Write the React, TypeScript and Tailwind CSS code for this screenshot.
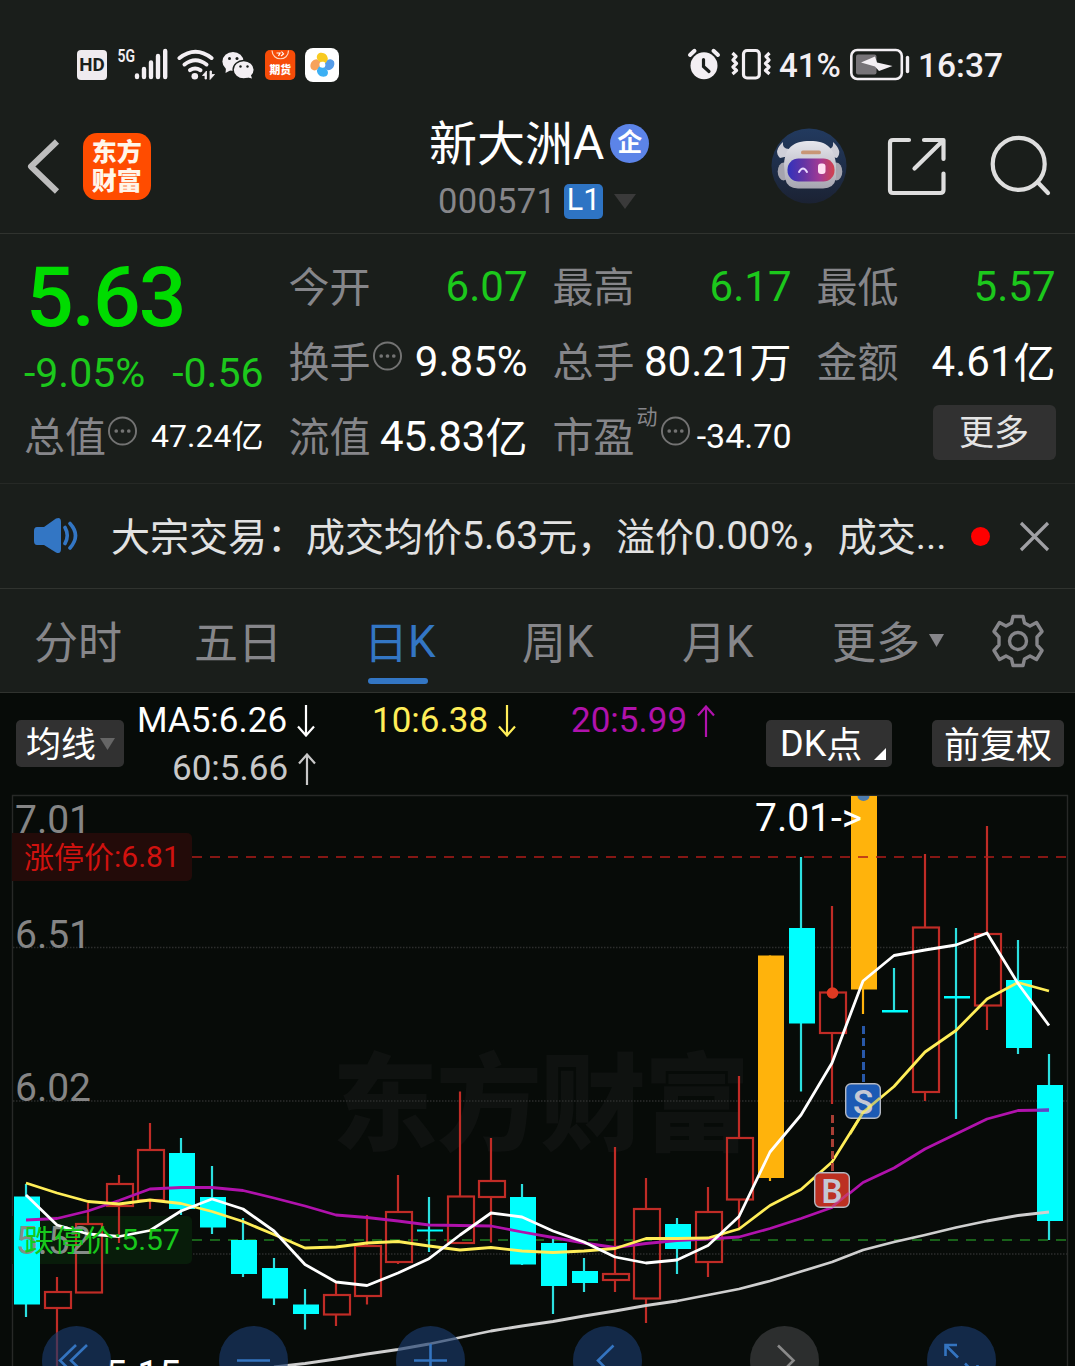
import React from "react";

const FONT = "font-[Roboto,'Noto_Sans_CJK_SC',sans-serif]";

type Kind = "down" | "up" | "mark";
type Candle = { k: Kind; t: number; b: number; h: number; l: number };
const c = (k: Kind, t: number, b: number, h: number, l: number): Candle => ({ k, t, b, h, l });

const candles: Candle[] = [
  c("down", 1196.5, 1304.5, 1184, 1317),
  c("up", 1292, 1308, 1277, 1380),
  c("up", 1224, 1292.5, 1203, 1292),
  c("up", 1184, 1206, 1175, 1243),
  c("up", 1150, 1200, 1123, 1209),
  c("down", 1153, 1209, 1138, 1215),
  c("down", 1197, 1227.5, 1166, 1234),
  c("down", 1240, 1274, 1218, 1277),
  c("down", 1268, 1298.5, 1258, 1305),
  c("down", 1304.5, 1314, 1289, 1329.5),
  c("up", 1295, 1314.5, 1282, 1326),
  c("up", 1246, 1296, 1215, 1304.5),
  c("up", 1212, 1262, 1175, 1264),
  c("down", 1229.5, 1231.5, 1197, 1252),
  c("up", 1196.5, 1243, 1091.5, 1243),
  c("up", 1181, 1197, 1138, 1242.5),
  c("down", 1197, 1264.5, 1184, 1265),
  c("down", 1243, 1286, 1239, 1314),
  c("down", 1271, 1283, 1258, 1292),
  c("up", 1274, 1280, 1147, 1292),
  c("up", 1209, 1298.5, 1178, 1323),
  c("down", 1224, 1249, 1218, 1274),
  c("up", 1212, 1262, 1187, 1277),
  c("up", 1138, 1199.5, 1076, 1230),
  c("mark", 955.5, 1178, 955.5, 1181),
  c("down", 928, 1023.5, 857, 1091.5),
  c("up", 992.5, 1033, 906, 1104),
  c("mark", 796, 989.5, 796, 1014),
  c("down", 1010, 1012.5, 968, 1011),
  c("up", 927.5, 1092, 854, 1101),
  c("down", 996, 998.5, 928, 1119),
  c("up", 934, 1005.5, 826, 1030),
  c("down", 980, 1048, 940, 1054),
  c("down", 1085, 1221, 1054, 1240),
];

const ma5 = [1195, 1225, 1234, 1236.5, 1230.5, 1211, 1199, 1209, 1231, 1264.5, 1282, 1285.5, 1273, 1258.7, 1235, 1213, 1217, 1231, 1242, 1257, 1263, 1260, 1245.5, 1216.5, 1152, 1115, 1063, 981, 955.5, 950, 945, 933, 983.5, 1025.5];
const ma10 = [1183, 1193, 1201.5, 1204, 1200, 1203.5, 1211.5, 1221.5, 1234.5, 1248, 1247, 1243, 1241.5, 1246, 1250, 1247.5, 1251, 1252.5, 1251, 1248.5, 1238.5, 1238.5, 1238, 1229, 1205.5, 1189.5, 1162, 1112.5, 1086.5, 1052, 1030.5, 999, 982.5, 991];
const ma20 = [1220, 1218.5, 1211, 1200.5, 1189, 1187.5, 1187.5, 1190.5, 1198, 1206, 1215, 1217.5, 1221, 1225, 1225.5, 1226, 1232, 1237.5, 1243, 1247.5, 1243.5, 1240.5, 1239, 1237, 1228.5, 1218.5, 1207.5, 1182.5, 1168, 1149, 1134, 1119, 1110.5, 1110];
const ma60 = [1367, 1363.5, 1359, 1354, 1349.5, 1344, 1337.5, 1331, 1326, 1321.5, 1316, 1311, 1305.5, 1301, 1295, 1289, 1281, 1271.5, 1262, 1250, 1242, 1235, 1227.5, 1221, 1215.5, 1212];

const cx = (i: number) => 26 + i * 31;
const line = (v: number[], from = 0) => v.map((y, i) => `${cx(i + from)},${y}`).join(" ");

/* Lowers the Chinese runs slightly so they sit level with the Latin digits. */
function T({ s }: { s: string }) {
  return (
    <span>
      {s.split(/([\u3000-\uffef]+)/).filter(Boolean).map((part, i) =>
        /[\u3000-\uffef]/.test(part) ? <span key={i} className="align-[-0.045em] leading-none">{part}</span> : part,
      )}
    </span>
  );
}

function CandleShape({ d, x }: { d: Candle; x: number }) {
  if (d.k === "up") {
    return (
      <g stroke="#c02c26" strokeWidth={2.2} fill="none">
        <path d={`M${x} ${d.h}V${d.t}M${x} ${d.b}V${Math.max(d.b, d.l)}`} />
        <rect x={x - 12} y={d.t} width={26} height={d.b - d.t} />
      </g>
    );
  }
  const color = d.k === "down" ? "#00ffff" : "#ffb30c";
  return (
    <g>
      <path d={`M${x} ${d.h}V${d.l}`} stroke={d.k === "down" ? "#2ce0e0" : color} strokeWidth={2.2} />
      <rect x={x - 12} y={d.t} width={26} height={d.b - d.t} fill={color} />
    </g>
  );
}

function Marker({ x, y, letter, fill }: { x: number; y: number; letter: string; fill: string }) {
  return (
    <g>
      <rect x={x - 17.3} y={y - 17.3} width={34.6} height={34.6} rx={5.5} fill={fill} stroke="#b4b8c2" strokeWidth={1.4} />
      <text x={x} y={y + 12.7} fontSize={33} fontWeight={600} textAnchor="middle" fill="#c4c8d4" fontFamily="Roboto, sans-serif">{letter}</text>
    </g>
  );
}

function Chart() {
  return (
    <svg className="block" width="1075" height="572" viewBox="0 794 1075 572" fontFamily="Roboto, 'Noto Sans CJK SC', sans-serif">
      <text x="332" y="1142" fontSize="106" fontWeight="900" fill="#0f1210" fontFamily="'Noto Sans CJK SC', sans-serif" textLength="418">东方财富</text>
      <path d="M12.5 1366V795.5H1067.5V1366" fill="none" stroke="#272927" strokeWidth="1.4" />
      <path d="M13 947.5H1067M13 1101H1067M13 1254H1067" stroke="#2c2e2c" strokeWidth="1.5" strokeDasharray="1.5 1.5" />
      <path d="M12 833H187a5 5 0 0 1 5 5V876a5 5 0 0 1-5 5H12Z" fill="#230b09" />
      <path d="M12 1216H187a5 5 0 0 1 5 5V1259a5 5 0 0 1-5 5H12Z" fill="#081c0a" />
      <path d="M192 1240H1067" stroke="#208020" strokeWidth="1.6" strokeDasharray="10 8" />
      <g fontSize="39" fill="#858585">
        <text x="15" y="833">7.01</text>
        <text x="15" y="948">6.51</text>
        <text x="15" y="1101">6.02</text>
      </g>
      {candles.map((d, i) => <CandleShape key={i} d={d} x={cx(i)} />)}
      <path d="M192 857H1067" stroke="#b01c18" strokeWidth="1.6" strokeDasharray="10 8" />
      <text x="15.5" y="1253.5" fontSize="39" fill="#858d88">5.52</text>
      <g fill="none" strokeWidth="2.8" strokeLinejoin="round">
        <polyline points={line(ma60, 8)} stroke="#cfcfcf" />
        <polyline points={line(ma20)} stroke="#b012ac" />
        <polyline points={line(ma10)} stroke="#ffee58" />
        <polyline points={line(ma5)} stroke="#ffffff" />
      </g>
      <polyline points="1037,1110.3 1049,1110" stroke="#5a48c8" strokeWidth="2.8" />
      <text x="24" y="867" fontSize="30" fill="#d0120f"><tspan dy="1">涨停价</tspan><tspan dy="-1">:6.81</tspan></text>
      <text x="24" y="1250" fontSize="30" fill="#18c81c"><tspan dy="1">跌停价</tspan><tspan dy="-1">:5.57</tspan></text>
      <path d="M863.5 1026V1083" stroke="#2858a8" strokeWidth="3" strokeDasharray="8 4" />
      <path d="M832.5 1115V1172" stroke="#a83e34" strokeWidth="3" strokeDasharray="8 4" />
      <path d="M857.5 796a6 5 0 0 0 12 0Z" fill="#4d7cae" />
      <circle cx="832.5" cy="993" r="5.8" fill="#e03a22" />
      <Marker x={863} y={1101} letter="S" fill="#1c5ab4" />
      <Marker x={832} y={1190} letter="B" fill="#bc3022" />
      <polyline points="850,1134 863,1112.5 880,1098" fill="none" stroke="#ffee58" strokeWidth="2.8" opacity=".75" />
      <polyline points="832,1207 849,1193" fill="none" stroke="#c83ab0" strokeWidth="2.8" opacity=".6" />
      <text x="755" y="831" fontSize="39" fill="#fff">7.01-&gt;</text>
      <text x="105" y="1387.5" fontSize="39" fill="#fff">5.15</text>
    </svg>
  );
}

function RoundButton({ gray, children }: { gray?: boolean; children: React.ReactNode }) {
  return (
    <div className={`h-[69px] w-[69px] shrink-0 rounded-full ${gray ? "bg-[#3c3d3e]/70" : "bg-[#1a3a6c]/65"}`}>
      <svg width="69" height="69" viewBox="0 0 69 69" fill="none" stroke={gray ? "#8a8a8a" : "#3474c0"} strokeWidth="2.6">{children}</svg>
    </div>
  );
}

function Controls() {
  return (
    <div className="absolute left-[42px] top-[532px] flex gap-[108px]">
      <RoundButton><path d="M34 19L18 34.5L34 50M45 19L29 34.5L45 50" /></RoundButton>
      <RoundButton><path d="M18 34.5H51" /></RoundButton>
      <RoundButton><path d="M18 34.5H51M34.5 18V51" /></RoundButton>
      <RoundButton><path d="M40.5 19.5L25 34.5L40.5 50" /></RoundButton>
      <RoundButton gray><path d="M28 19.5L43.5 34.5L28 50" /></RoundButton>
      <RoundButton><path d="M18.5 30V19H30M19 19.5L31 31.5M50.5 39V50H39M50 49.5L38 37.5" /></RoundButton>
    </div>
  );
}

const PETAL = "M-1.5 -2.6C-6 -4.5 -7 -9 -3.5 -11.5C1 -13.200 5.500 -10 5.500 -5.500L3.200 -1.500C2 -3 0 -3.300 -1.500 -2.600Z";

function StatusBar() {
  return (
    <div className="flex h-[104px] items-center pl-[77px] pt-[26px] text-[#f3eff3]">
      <svg width="264" height="40" viewBox="77 45 264 40">
        <rect x="77" y="50" width="30" height="30" rx="4" fill="#efebef" />
        <text x="92" y="71.4" fontSize="18.5" fontWeight="700" textAnchor="middle" fill="#1a1e1b" fontFamily="Roboto" textLength="25.5" lengthAdjust="spacingAndGlyphs">HD</text>
        <text x="117.5" y="62" fontSize="17.5" fontWeight="600" fill="#f3eff3" fontFamily="Roboto" textLength="17.5" lengthAdjust="spacingAndGlyphs">5G</text>
        <path d="M137 75.5V77M144 69V77M151 62.500V77M158 56V77M165.200 51V77" stroke="#f3eff3" strokeWidth="4.400" strokeLinecap="round" />
        <g fill="none" stroke="#f3eff3" strokeWidth="4" strokeLinecap="round">
          <path d="M179.5 58Q195.5 45.5 211.5 58" />
          <path d="M184.5 64.5Q195.5 56 206.5 64.5" />
          <path d="M190 70.2Q195 66.8 200.5 70.2" />
        </g>
        <circle cx="194.8" cy="76.2" r="3.3" fill="#f3eff3" />
        <path d="M202.5 75.5L206.5 71V79H205V75.5ZM210 71V79.5L214.5 74.5H211.5V71Z" fill="#f3eff3" stroke="#f3eff3" strokeWidth=".8" />
        <g fill="#f3eff3">
          <ellipse cx="233" cy="61.5" rx="10.6" ry="9.6" />
          <path d="M226 68L225.5 73L231 70Z" />
          <ellipse cx="243.7" cy="69.7" rx="10.6" ry="9.2" stroke="#1a1e1b" strokeWidth="1.4" />
          <path d="M246 77L252 78.5L250.5 74Z" />
        </g>
        <g fill="#1a1e1b">
          <circle cx="229.5" cy="58.5" r="1.5" /><circle cx="237" cy="58.5" r="1.5" />
          <circle cx="240.5" cy="66.5" r="1.2" /><circle cx="247.5" cy="66.5" r="1.2" />
        </g>
        <rect x="265" y="50" width="30.3" height="30" rx="5" fill="#f64c08" />
        <path d="M272 50.5C272.5 61.5 288.5 61.5 288.5 50.5" fill="none" stroke="#ffd8c0" strokeWidth="1.2" />
        <path d="M276.500 53H280L278.500 56M281.500 51.500L283.500 54L281 56" fill="none" stroke="#fff" strokeWidth="1.2" />
        <text x="280.2" y="73.6" fontSize="10.800" fontWeight="900" textAnchor="middle" fill="#fff" fontFamily="Noto Sans CJK SC">期货</text>
        <rect x="305" y="48" width="34" height="34" rx="8" fill="#fff" />
        <g transform="translate(322.4 64.8)">
          <path d={PETAL} fill="#f6a35c" transform="rotate(-90)" />
          <path d={PETAL} fill="#3cb0f4" transform="rotate(180)" />
          <path d={PETAL} fill="#559ce8" transform="rotate(90)" />
          <path d={PETAL} fill="#f8ca20" />
        </g>
      </svg>
      <svg className="ml-[346px] mr-[8px] shrink-0" width="84" height="40" viewBox="687 45 84 40" fill="none" stroke="#f3eff3">
        <circle cx="704" cy="65.8" r="13.5" fill="#f3eff3" stroke="none" />
        <path d="M703.5 59.5V66.5L709 71.5" stroke="#1a1e1b" strokeWidth="3.2" strokeLinecap="round" />
        <path d="M690 55L694.5 50.8M718 55L713.5 50.8" strokeWidth="4" strokeLinecap="round" />
        <rect x="743.5" y="50.5" width="15.8" height="27.5" rx="3.5" strokeWidth="3.2" />
        <path d="M732.500 53L736 56.500L733 60L736.500 63.500L733 67L736.500 70.500L732.500 74M769.500 53L766 56.500L769 60L765.500 63.500L769 67L765.500 70.500L769.500 74" strokeWidth="3.200" strokeLinejoin="round" />
      </svg>
      <span className="w-[70px] shrink-0 pt-[2px] text-[33px] font-medium leading-[40px]">41%</span>
      <svg className="shrink-0" width="62" height="34" viewBox="848 48 62 34">
        <rect x="850.3" y="50" width="50.5" height="29" rx="6" fill="none" stroke="#f3eff3" strokeWidth="2.6" />
        <rect x="855" y="54.5" width="20.5" height="20" rx="2" fill="#777478" />
        <path d="M860 62.5L874 56.5L876 62.5L891.5 66L878 71L874 66.500Z" fill="#f3eff3" />
        <path d="M906.5 57.5V71.5" stroke="#f3eff3" strokeWidth="3.4" strokeLinecap="round" />
      </svg>
      <span className="ml-[7px] pt-[2px] text-[33.5px] font-medium leading-[40px]">16:37</span>
    </div>
  );
}

function Avatar() {
  return (
    <svg width="76" height="76" viewBox="0 0 76 76">
      <defs>
        <linearGradient id="sky" x1="0" y1="0" x2="0" y2="1"><stop stopColor="#223a5f" /><stop offset="1" stopColor="#1b2233" /></linearGradient>
        <linearGradient id="visor"><stop stopColor="#3232bc" /><stop offset=".35" stopColor="#6434a4" /><stop offset=".7" stopColor="#a43a94" /><stop offset="1" stopColor="#d2424c" /></linearGradient>
        <linearGradient id="shell" x1="0" y1="0" x2="0" y2="1"><stop stopColor="#e6e6ed" /><stop offset="1" stopColor="#a6a5b0" /></linearGradient>
      </defs>
      <circle cx="38" cy="38" r="37.5" fill="url(#sky)" />
      <path d="M12 14Q2 23 9 30L18 28L18 21Q11 21 12 14ZM62 14Q72 23 66 30L57 28L57 21Q63 21 62 14Z" fill="#cfcfd8" />
      <ellipse cx="12.5" cy="43.5" rx="5.8" ry="9" fill="#a5a4ae" />
      <ellipse cx="65.5" cy="43.5" rx="5.8" ry="9" fill="#a5a4ae" />
      <path d="M13 36C14 20 22 13 39 13S63 20 65 36L65 50Q63 60.500 52 60.500H27Q16 60.500 14 50Z" fill="url(#shell)" />
      <rect x="16.500" y="30.5" width="47" height="23" rx="11" fill="url(#visor)" />
      <rect x="30" y="22.5" width="20" height="3.8" rx="1.9" fill="#c89676" />
      <path d="M28 44Q32 37 36 44" fill="none" stroke="#e8d8ff" strokeWidth="2" strokeLinecap="round" />
      <rect x="47" y="35.5" width="7.5" height="10.5" rx="3" fill="#ffdff2" />
    </svg>
  );
}

function Header() {
  return (
    <header className="flex h-[130px] border-b border-[#30332f]">
      <svg className="ml-[24px] mt-[32px] shrink-0" width="40" height="62" viewBox="24 136 40 62"><path d="M57 141.5L31 166.5L57 191.5" fill="none" stroke="#bdbdbd" strokeWidth="6" strokeLinejoin="round" /></svg>
      <div className="ml-[19px] mt-[28.5px] flex h-[67px] w-[67.5px] shrink-0 flex-col items-center justify-center rounded-[14px] bg-[#ff4c00] pb-[2px] font-['Noto_Sans_CJK_SC',sans-serif] text-[25px] font-black leading-[29px] text-[#fff6ea]">
        <span>东方</span><span>财富</span>
      </div>
      <div className="ml-[278.5px] w-[222px] shrink-0 pt-[9px]">
        <div className="flex h-[60px] items-center text-[48px] leading-[60px] text-white">
          <span className="whitespace-nowrap"><T s="新大洲A" /></span>
          <span className="ml-[6px] flex h-[39px] w-[39px] shrink-0 items-center justify-center rounded-full bg-[#5c84e8] pb-[1px] text-[25px] font-bold leading-none">企</span>
        </div>
        <div className="flex h-[56px] items-center pl-[9px]">
          <span className="text-[34.5px] leading-[40px] tracking-[0.3px] text-[#86868a]">000571</span>
          <span className="ml-[8px] flex h-[35px] w-[39px] items-center justify-center rounded-[5px] bg-[#2e74c4] pb-[1px] text-[30.5px] leading-none text-white">L1</span>
          <svg className="ml-[11px]" width="22" height="15" viewBox="0 0 22 15"><path d="M0 0H22L11 15Z" fill="#3a3a3a" /></svg>
        </div>
      </div>
      <div className="ml-[120px] mt-[24px] shrink-0"><Avatar /></div>
      <svg className="ml-[38px] mt-[30px] shrink-0" width="170" height="64" viewBox="885 134 170 64" fill="none" stroke="#dedede" strokeWidth="4.2" strokeLinecap="round">
        <path d="M909 140H893Q890 140 890 143V190Q890 193 893 193H940Q943.5 193 943.5 190V173.5M924 140H943.5V159M942 141.5L914.5 168.5" strokeLinejoin="round" />
        <circle cx="1018.7" cy="163.9" r="26" />
        <path d="M1037.5 182L1048 193" />
      </svg>
    </header>
  );
}

function Dots() {
  return (
    <svg className="shrink-0" width="31" height="32" viewBox="0 0 32 32">
      <circle cx="16" cy="16" r="14" fill="none" stroke="#737373" strokeWidth="2" />
      <g fill="#737373"><circle cx="9.5" cy="16" r="1.9" /><circle cx="16" cy="16" r="1.9" /><circle cx="22.5" cy="16" r="1.9" /></g>
    </svg>
  );
}

function Stat({ label, value, green, info, size }: { label: string; value: string; green?: boolean; info?: boolean; size?: "s" | "m" }) {
  return (
    <div className="flex h-[75px] items-center justify-between whitespace-nowrap">
      <span className="flex items-center text-[41px] leading-[75px] text-[#86868a]"><T s={label} />{info && <span className="-mt-2.5 ml-px"><Dots /></span>}</span>
      <span className={`${green ? "text-[#1cc81c]" : "text-white"} ${size === "s" ? "text-[32px]" : size === "m" ? "text-[34px]" : "text-[42px]"} leading-[73px]`}><T s={value} /></span>
    </div>
  );
}

function Quote() {
  return (
    <section className="flex h-[250px] border-b border-[#262926] pt-[14.5px]">
      <div className="ml-[24px] w-[239.5px]">
        <div className="flex h-[97px] items-center pl-[2px] pt-[2px] text-[84px] font-medium leading-[96px] tracking-[-2px] text-[#00dc00]">5.63</div>
        <div className="flex h-[53px] items-center justify-between pt-[1px] text-[41px] leading-[54px] text-[#1cc81c]"><span>-9.05%</span><span>-0.56</span></div>
        <Stat label="总值" value="47.24亿" info size="s" />
      </div>
      <div className="ml-[25px] w-[239px]">
        <Stat label="今开" value="6.07" green />
        <Stat label="换手" value="9.85%" info />
        <Stat label="流值" value="45.83亿" />
      </div>
      <div className="ml-[25px] w-[239px]">
        <Stat label="最高" value="6.17" green />
        <Stat label="总手" value="80.21万" />
        <div className="flex h-[75px] items-center justify-between whitespace-nowrap text-[#86868a]">
          <span className="flex items-center text-[41px] leading-[75px]"><T s="市盈" /><span className="mb-[38px] ml-[2px] text-[21px] leading-none">动</span><span className="-mt-2.5 ml-[2px]"><Dots /></span></span>
          <span className="text-[34px] leading-[73px] text-white">-34.70</span>
        </div>
      </div>
      <div className="ml-[25px] w-[239px]">
        <Stat label="最低" value="5.57" green />
        <Stat label="金额" value="4.61亿" />
        <button className="ml-auto mt-[6px] block h-[55px] w-[123px] rounded-[6px] bg-[#313131] text-[35px] leading-[54px] text-[#e4e4e4]"><T s="更多" /></button>
      </div>
    </section>
  );
}

function Notice() {
  return (
    <section className="flex h-[105px] items-center border-b border-[#30332f]">
      <svg className="ml-[33px] shrink-0" width="46" height="38" viewBox="33 517 46 38">
        <path d="M37 527H44L56 518.500Q61 516.500 61 522V549Q61 554.500 56 552.500L44 545H37Q34 545 34 541V531Q34 527 37 527Z" fill="#3376c4" />
        <path d="M65 527.5Q69.5 535.5 65 543.5M70 523.5Q81 535.5 70 548" fill="none" stroke="#3376c4" strokeWidth="3.6" strokeLinecap="round" />
      </svg>
      <span className="ml-[32px] w-[860px] shrink-0 whitespace-nowrap text-[39px] leading-[60px] text-[#e2e2e2]"><T s="大宗交易：成交均价5.63元，溢价0.00%，成交..." /></span>
      <span className="h-[19px] w-[19px] shrink-0 rounded-full bg-[#f00]" />
      <svg className="ml-[29px] shrink-0" width="31" height="31" viewBox="0 0 31 31"><path d="M2 2L29 29M29 2L2 29" stroke="#a0a0a4" strokeWidth="3.2" /></svg>
    </section>
  );
}

function Tabs() {
  return (
    <nav className="flex h-[104px] border-b border-[#30332f] text-[44px] leading-[107px] text-[#86868a] whitespace-nowrap">
      <span className="ml-[34px] w-[160px]"><T s="分时" /></span>
      <span className="w-[170px]"><T s="五日" /></span>
      <span className="relative w-[158px] text-[#3376c4]"><T s="日K" /><span className="absolute left-[4px] top-[89px] h-[6px] w-[60px] rounded-full bg-[#3376c4]" /></span>
      <span className="w-[160px]"><T s="周K" /></span>
      <span className="w-[150px]"><T s="月K" /></span>
      <span><T s="更多" /></span>
      <svg className="ml-[9px] mt-[45px]" width="15" height="13" viewBox="0 0 15 13"><path d="M0 0H15L7.5 13Z" fill="#86868a" /></svg>
      <svg className="ml-[47px] mt-[24px]" width="54" height="56" viewBox="-27 -28 54 56" fill="none" stroke="#86868a" strokeWidth="3.4" strokeLinejoin="round">
        <path d="M-5 -24.5H5L6.5 -18L12 -15L18.5 -18.5L24 -9.5L19 -4V4L24 9.5L18.5 18.5L12 15L6.5 18L5 24.5H-5L-6.5 18L-12 15L-18.5 18.5L-24 9.5L-19 4V-4L-24 -9.5L-18.5 -18.5L-12 -15L-6.5 -18Z" />
        <circle r="8.5" />
      </svg>
    </nav>
  );
}

function Arrow({ up }: { up?: boolean }) {
  return (
    <svg className="ml-[10px]" width="18" height="32" viewBox="0 0 18 32" fill="none" stroke="currentColor" strokeWidth="2.2">
      <path d={up ? "M9 32V1M1 10.5L9 1.5L17 10.5" : "M9 0V31M1 21.5L9 30.5L17 21.5"} />
    </svg>
  );
}

function Indicators() {
  return (
    <section className="flex h-[101px] text-[35px] text-white whitespace-nowrap">
      <button className="ml-[16px] mt-[27px] flex h-[47px] w-[108px] shrink-0 items-center rounded-[5px] bg-[#313131] pl-[10px] leading-[47px]">
        <T s="均线" /><svg className="ml-[4px]" width="15" height="12" viewBox="0 0 15 12"><path d="M0 0H15L7.5 12Z" fill="#666" /></svg>
      </button>
      <div className="ml-[13px] w-[235px] shrink-0 pt-[4px] leading-[48px]">
        <div className="flex h-[48px] items-center">MA5:6.26<Arrow /></div>
        <div className="flex h-[48px] items-center pl-[35px] text-[#c8c8c8]">60:5.66<Arrow up /></div>
      </div>
      <div className="flex h-[54px] w-[199px] shrink-0 items-center pt-[1px] leading-[48px] text-[#ffee58]">10:6.38<Arrow /></div>
      <div className="flex h-[54px] w-[195px] shrink-0 items-center pt-[1px] leading-[48px] text-[#b012ac]">20:5.99<Arrow up /></div>
      <button className="mt-[27px] flex h-[47px] w-[126px] shrink-0 rounded-[5px] bg-[#313131] pl-[14px] text-[36px] leading-[48px]">
        <T s="DK点" /><svg className="ml-[12px] mt-[28px]" width="12" height="12" viewBox="0 0 12 12"><path d="M12 0V12H0Z" fill="#fff" /></svg>
      </button>
      <button className="ml-[40px] mt-[27px] h-[47px] w-[132px] shrink-0 rounded-[5px] bg-[#313131] text-[36px] leading-[48px]"><T s="前复权" /></button>
    </section>
  );
}

export default function App() {
  return (
    <main lang="zh-CN" className={`h-[1366px] w-[1075px] overflow-hidden bg-[#1a1e1b] ${FONT}`}>
      <StatusBar />
      <Header />
      <Quote />
      <Notice />
      <Tabs />
      <div className="bg-[#070b08]">
        <Indicators />
        <div className="relative h-[572px] overflow-hidden">
          <Chart />
          <Controls />
        </div>
      </div>
    </main>
  );
}
